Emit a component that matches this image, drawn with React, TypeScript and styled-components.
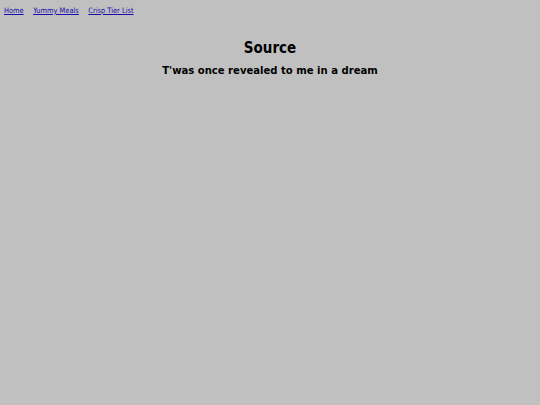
import styled, { createGlobalStyle } from "styled-components";

const Global = createGlobalStyle`
  html, body {
    margin: 0;
    padding: 0;
    background: #c0c0c0;
    font-family: "DejaVu Sans Condensed", "DejaVu Sans", sans-serif;
    color: #000;
  }
`;

const Page = styled.div`
  min-height: 405px;
  background: #c0c0c0;
`;

const Nav = styled.nav`
  display: flex;
  gap: 9.5px;
  padding: 7px 4px 0;
  font-size: 7.4px;
  line-height: 8px;
`;

const NavLink = styled.a`
  color: #1a0dab;
  text-decoration: underline;
`;

const Main = styled.main`
  text-align: center;
  padding-top: 24px;
`;

const Title = styled.h1`
  font-size: 15px;
  line-height: 18px;
  font-weight: bold;
  margin: 0 0 7px;
`;

const Subtitle = styled.h2`
  font-size: 11.2px;
  line-height: 13px;
  font-weight: bold;
  margin: 0;
`;

export default function App() {
  return (
    <Page>
      <Global />
      <Nav>
        <NavLink href="#">Home</NavLink>
        <NavLink href="#">Yummy Meals</NavLink>
        <NavLink href="#">Crisp Tier List</NavLink>
      </Nav>
      <Main>
        <Title>Source</Title>
        <Subtitle>T'was once revealed to me in a dream</Subtitle>
      </Main>
    </Page>
  );
}
